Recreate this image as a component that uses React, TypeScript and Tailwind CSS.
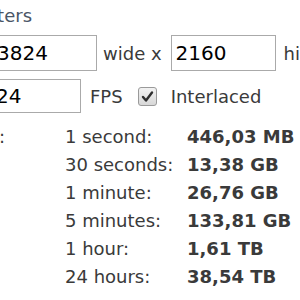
import React from 'react'

const ROWS: [string, string][] = [
  ['1 second:', '446,03 MB'],
  ['30 seconds:', '13,38 GB'],
  ['1 minute:', '26,76 GB'],
  ['5 minutes:', '133,81 GB'],
  ['1 hour:', '1,61 TB'],
  ['24 hours:', '38,54 TB'],
]

function CheckBox() {
  return (
    <div className="flex h-[19px] w-[19px] shrink-0 items-center justify-center rounded-[3px] border border-[#9a9a9a] bg-gradient-to-b from-[#f2f2f2] to-[#d8d8d8]">
      <svg width="13" height="13" viewBox="0 0 13 13">
        <path d="M2 7 L5 10.5 L11 2.5" fill="none" stroke="#2e2e2e" strokeWidth="2.4" strokeLinecap="round" strokeLinejoin="round" />
      </svg>
    </div>
  )
}

export default function App() {
  return (
    <div className="relative h-[300px] w-[300px] overflow-hidden bg-white text-[#3a3a3a] [font-family:'DejaVu_Sans',Verdana,sans-serif]">
      {/* heading, cut on the left */}
      <div className="whitespace-nowrap pt-[4px] text-[18px] leading-[24px] text-[#4a5566]">
        <span className="-ml-[71px]">Parameters</span>
      </div>

      {/* resolution row */}
      <div className="mt-[7px] flex items-center whitespace-nowrap text-[18px]">
        <div className="-ml-[40px] flex h-[36px] w-[137px] shrink-0 items-center border border-[#aaa] pl-[36px] text-[20px] text-black">
          3824
        </div>
        <span className="ml-[6px]">wide x</span>
        <div className="ml-[9px] flex h-[36px] w-[105px] shrink-0 items-center border border-[#aaa] pl-[4px] text-[20px] text-black">
          2160
        </div>
        <span className="ml-[8px]">high</span>
      </div>

      {/* frame rate row */}
      <div className="mt-[8px] flex items-center whitespace-nowrap text-[18px]">
        <div className="-ml-[40px] flex h-[34px] w-[121px] shrink-0 items-center border border-[#aaa] pl-[35px] text-[20px] text-black">
          24
        </div>
        <span className="ml-[9px]">FPS</span>
        <div className="ml-[15px]">
          <CheckBox />
        </div>
        <span className="ml-[14px]">Interlaced</span>
      </div>

      {/* sizes */}
      <div className="mt-[10px] whitespace-nowrap text-[18px] leading-[28px]">
        {ROWS.map(([label, value], i) => (
          <div key={label} className="flex">
            <span className="-ml-[95px] w-[100px] shrink-0 text-right">{i === 0 ? 'Size:' : ''}</span>
            <span className="ml-[60px] w-[122px] shrink-0">{label}</span>
            <span className="font-bold">{value}</span>
          </div>
        ))}
      </div>
    </div>
  )
}
